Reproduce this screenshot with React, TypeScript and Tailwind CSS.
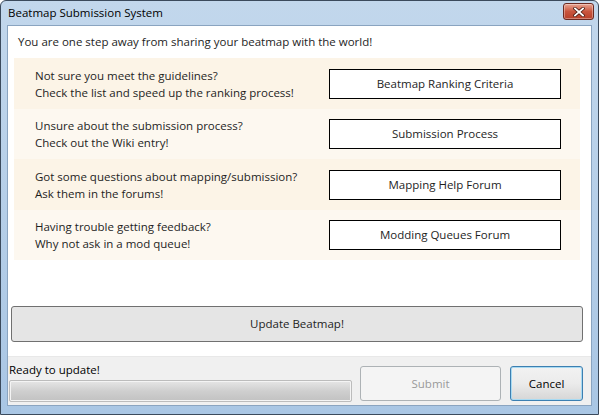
import React from "react";

const rows = [
  {
    lines: ["Not sure you meet the guidelines?", "Check the list and speed up the ranking process!"],
    button: "Beatmap Ranking Criteria",
  },
  {
    lines: ["Unsure about the submission process?", "Check out the Wiki entry!"],
    button: "Submission Process",
  },
  {
    lines: ["Got some questions about mapping/submission?", "Ask them in the forums!"],
    button: "Mapping Help Forum",
  },
  {
    lines: ["Having trouble getting feedback?", "Why not ask in a mod queue!"],
    button: "Modding Queues Forum",
  },
];

const CloseButton: React.FC = () => (
  <div className="flex h-[17px] w-[31px] items-center justify-center rounded-[3px] border border-[#6b2a22] bg-gradient-to-b from-[#e8a493] via-[#c9553e] to-[#b8402a] shadow-[inset_0_0_0_1px_rgba(255,255,255,0.35)]">
    <svg width="12" height="10" viewBox="0 0 12 10">
      <path d="M2 1.5 L10 8.5 M10 1.5 L2 8.5" stroke="#4a1a12" strokeWidth="3.4" strokeLinecap="square" />
      <path d="M2 1.5 L10 8.5 M10 1.5 L2 8.5" stroke="#ffffff" strokeWidth="1.8" strokeLinecap="square" />
    </svg>
  </div>
);

const App: React.FC = () => {
  return (
    <div
      className="h-[415px] w-[599px] overflow-hidden text-[11.5px] text-[#1e1e1e]"
      style={{ fontFamily: '"Open Sans", "Noto Sans", sans-serif' }}
    >
      <div className="flex h-full w-full flex-col rounded-t-[6px] border border-[#3b4a5c] bg-gradient-to-b from-[#c2d7ec] to-[#a9c6e4] px-[6px] pb-[8px]">
        {/* title bar */}
        <div className="flex h-[24px] shrink-0 items-center justify-between">
          <span className="pl-[1px] text-black">Beatmap Submission System</span>
          <div className="mr-[-2px] mt-[-3px]">
            <CloseButton />
          </div>
        </div>

        {/* client area */}
        <div className="flex flex-1 flex-col border border-[#8aa4c0] bg-white">
          <div className="px-[10px] pt-[7px]">You are one step away from sharing your beatmap with the world!</div>

          <div className="ml-[6px] mr-[11px] mt-[8px] flex flex-col">
            {rows.map((row, i) => (
              <div
                key={row.button}
                className={`flex h-[50.5px] items-center justify-between pl-[21px] pr-[19px] ${
                  i % 2 === 0 ? "bg-[#fcf4e7]" : "bg-[#fdf8f0]"
                }`}
              >
                <div className="leading-[17px]">
                  <div>{row.lines[0]}</div>
                  <div>{row.lines[1]}</div>
                </div>
                <div className="flex h-[30px] w-[232px] items-center justify-center border border-black bg-white">
                  {row.button}
                </div>
              </div>
            ))}
          </div>

          <div className="flex-1" />

          <div className="mb-[14px] ml-[3px] mr-[8px] flex h-[36px] items-center justify-center rounded-[3px] border border-[#707070] bg-[#e5e5e5]">
            Update Beatmap!
          </div>

          <div className="flex h-[49px] items-end gap-[8px] border-t border-[#e8e8e8] bg-[#f0f0f0] pb-[3px] pl-[1px] pr-[8px]">
            <div className="flex w-[344px] flex-col">
              <span className="leading-[14px] text-black">Ready to update!</span>
              <div className="mt-[3px] h-[22px] rounded-[2px] border border-[#bcbcbc] bg-gradient-to-b from-[#e6e6e6] via-[#cfcfcf] to-[#c2c2c2] shadow-[inset_0_0_0_1px_#f4f4f4]" />
            </div>
            <div className="mb-[1px] flex h-[35px] w-[142px] items-center justify-center rounded-[3px] border border-[#adb2b5] bg-[#f4f4f4] text-[#9a9a9a]">
              Submit
            </div>
            <div className="mb-[1px] ml-[1px] flex h-[35px] w-[73px] items-center justify-center rounded-[3px] border border-[#3c7fb1] bg-gradient-to-b from-[#f2f2f2] via-[#ebebeb] to-[#d6d6d6] text-black shadow-[inset_0_0_0_1px_#a8daf2]">
              Cancel
            </div>
          </div>
        </div>
      </div>
    </div>
  );
};

export default App;
